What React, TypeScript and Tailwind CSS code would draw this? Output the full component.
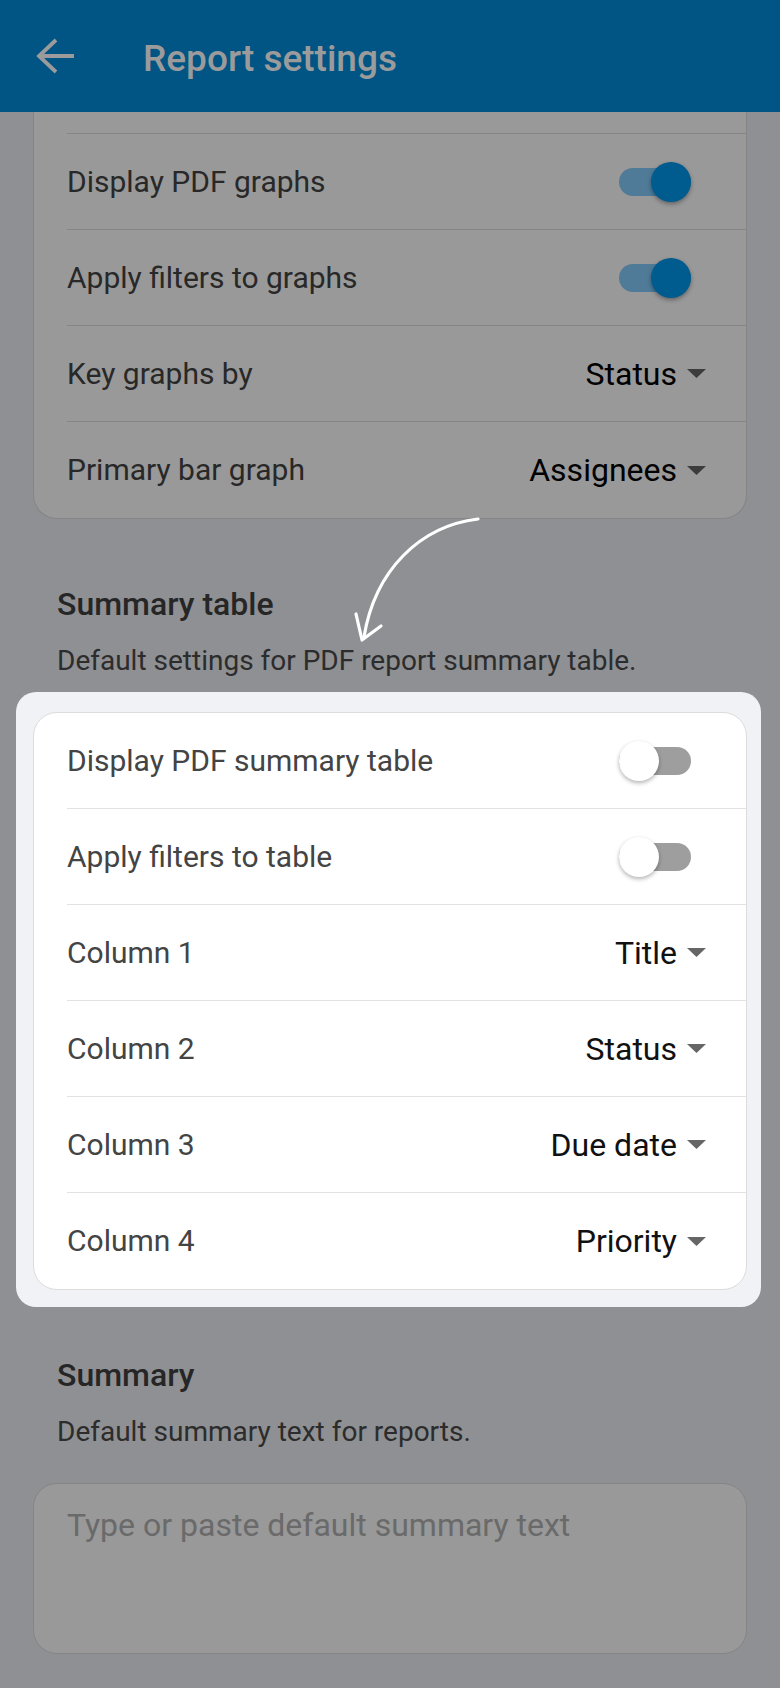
import type { ReactNode } from "react";

type Tone = "dim" | "lit";

function Toggle({ on }: { on: boolean }) {
  return (
    <div className="relative mr-[15px] flex h-[40px] w-[72px] items-center">
      <div
        className={
          on
            ? "h-[28px] w-[72px] rounded-full bg-[#4f7b99]"
            : "h-[28px] w-[72px] rounded-full bg-[#9e9e9e]"
        }
      />
      {/* thumb sits over the track */}
      <div
        className={
          on
            ? "absolute right-0 top-0 h-[40px] w-[40px] rounded-full bg-[#005b8e] shadow-[0_2px_4px_rgba(0,0,0,0.35)]"
            : "absolute left-0 top-0 h-[40px] w-[40px] rounded-full bg-white shadow-[0_2px_4px_rgba(0,0,0,0.3)]"
        }
      />
    </div>
  );
}

function Select({ value, tone }: { value: string; tone: Tone }) {
  return (
    <div className="flex items-center gap-[10px]">
      <span
        className={
          tone === "dim"
            ? "text-[32px] leading-[38px] text-black"
            : "text-[32px] leading-[38px] text-[#111111]"
        }
      >
        {value}
      </span>
      <svg width="19" height="9" viewBox="0 0 19 9">
        <path d="M0 0h19L9.5 9z" fill={tone === "dim" ? "#3c3c3c" : "#666666"} />
      </svg>
    </div>
  );
}

function Row({
  label,
  tone,
  last,
  children,
}: {
  label: string;
  tone: Tone;
  last?: boolean;
  children: ReactNode;
}) {
  const line = tone === "dim" ? "border-[#858585]" : "border-[#e2e2e2]";

  return (
    <div
      className={`ml-[33px] flex h-[96px] items-center justify-between pr-[40px] ${
        last ? "" : `border-b ${line}`
      }`}
    >
      <span
        className={
          tone === "dim"
            ? "text-[30px] leading-[36px] text-[#282828]"
            : "text-[30px] leading-[36px] text-[#444444]"
        }
      >
        {label}
      </span>
      {children}
    </div>
  );
}

function SectionHead({ title, text }: { title: string; text: string }) {
  return (
    <div className="pl-[24px]">
      <h2 className="text-[32px] font-medium leading-[36px] text-[#262626]">
        {title}
      </h2>
      <p className="mt-[22px] text-[28px] leading-[34px] text-[#2c2c2c]">
        {text}
      </p>
    </div>
  );
}

export default function App() {
  return (
    <div className="relative flex h-[1688px] w-full flex-col overflow-hidden bg-[#8f9093] font-[family-name:Roboto,'Noto_Sans',sans-serif]">
      <header className="flex h-[112px] shrink-0 items-center bg-[#005584]">
        <svg
          className="ml-[36px]"
          width="40"
          height="36"
          viewBox="0 0 40 36"
          fill="none"
          stroke="#9b9b9b"
          strokeWidth="3.8"
        >
          <path d="M3 18H38" />
          <path d="M20 2L3 18L20 34" />
        </svg>
        <h1 className="ml-[67px] mt-[6px] text-[37px] font-medium text-[#9b9b9b]">
          Report settings
        </h1>
      </header>

      <main className="flex-1 px-[33px]">
        {/* graphs card, scrolled partly under the header */}
        <div className="rounded-b-[24px] border-x border-b border-[#858585] bg-[#999999]">
          <div className="ml-[33px] h-[22px] border-b border-[#858585]" />
          <Row label="Display PDF graphs" tone="dim">
            <Toggle on />
          </Row>
          <Row label="Apply filters to graphs" tone="dim">
            <Toggle on />
          </Row>
          <Row label="Key graphs by" tone="dim">
            <Select value="Status" tone="dim" />
          </Row>
          <Row label="Primary bar graph" tone="dim" last>
            <Select value="Assignees" tone="dim" />
          </Row>
        </div>

        <div className="mt-[67px]">
          <SectionHead
            title="Summary table"
            text="Default settings for PDF report summary table."
          />
        </div>

        {/* highlighted block */}
        <div className="-ml-[17px] -mr-[14px] mt-[14px] rounded-[20px] bg-[#f1f2f6] pb-[17px] pl-[17px] pr-[14px] pt-[20px]">
          <div className="rounded-[24px] border border-[#dcdcdc] bg-white">
            <Row label="Display PDF summary table" tone="lit">
              <Toggle on={false} />
            </Row>
            <Row label="Apply filters to table" tone="lit">
              <Toggle on={false} />
            </Row>
            <Row label="Column 1" tone="lit">
              <Select value="Title" tone="lit" />
            </Row>
            <Row label="Column 2" tone="lit">
              <Select value="Status" tone="lit" />
            </Row>
            <Row label="Column 3" tone="lit">
              <Select value="Due date" tone="lit" />
            </Row>
            <Row label="Column 4" tone="lit" last>
              <Select value="Priority" tone="lit" />
            </Row>
          </div>
        </div>

        <div className="mt-[50px]">
          <SectionHead title="Summary" text="Default summary text for reports." />
        </div>

        <div className="mt-[34px] h-[171px] rounded-[24px] border border-[#858585] bg-[#999999] px-[33px] pt-[23px]">
          <span className="text-[32px] leading-[36px] text-[#6a6a6a]">
            Type or paste default summary text
          </span>
        </div>
      </main>

      {/* hand-drawn pointer arrow */}
      <svg
        className="pointer-events-none absolute left-[340px] top-[505px]"
        width="150"
        height="145"
        viewBox="340 505 150 145"
        fill="none"
        stroke="white"
        strokeWidth="3.2"
        strokeLinecap="round"
        strokeLinejoin="round"
      >
        <path d="M478 519C420 526 375 570 364 637" />
        <path d="M356 614L362 640L381 626" />
      </svg>
    </div>
  );
}
